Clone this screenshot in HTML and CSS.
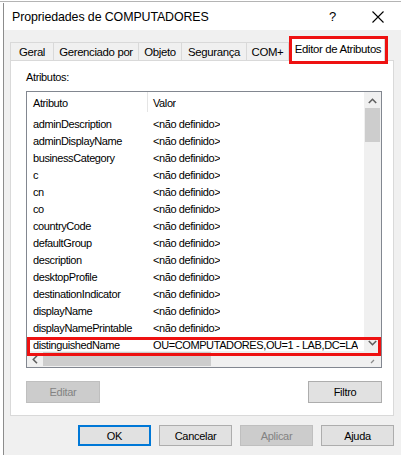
FILE: index.html
```html
<!DOCTYPE html>
<html>
<head>
<meta charset="utf-8">
<link rel="stylesheet" href="styles.css">
</head>
<body>
<div class="topline"></div>
<div class="window">
  <div class="titlebar">
    <span class="title">Propriedades de COMPUTADORES</span>
    <span class="help">?</span>
    <span class="close"><svg width="12" height="12" viewBox="0 0 12 12"><path d="M0.5 0.5 L11.5 11.5 M11.5 0.5 L0.5 11.5" stroke="#000" stroke-width="1.1" fill="none"/></svg></span>
  </div>
  <div class="body">
    <div class="tabs">
      <div class="tab t-geral">Geral</div>
      <div class="tab t-ger">Gerenciado por</div>
      <div class="tab t-obj">Objeto</div>
      <div class="tab t-seg">Segurança</div>
      <div class="tab t-com">COM+</div>
      <div class="tab active">Editor de Atributos<span class="mark mark-tab"></span></div>
    </div>
    <div class="panel">
      <div class="label">Atributos:</div>
      <div class="listbox">
        <div class="listmain">
          <div class="listview">
            <div class="row head"><span class="c1">Atributo</span><span class="sep"></span><span class="c2">Valor</span></div>
            <div class="row"><span class="c1">adminDescription</span><span class="c2">&lt;não definido&gt;</span></div>
            <div class="row"><span class="c1">adminDisplayName</span><span class="c2">&lt;não definido&gt;</span></div>
            <div class="row"><span class="c1">businessCategory</span><span class="c2">&lt;não definido&gt;</span></div>
            <div class="row"><span class="c1">c</span><span class="c2">&lt;não definido&gt;</span></div>
            <div class="row"><span class="c1">cn</span><span class="c2">&lt;não definido&gt;</span></div>
            <div class="row"><span class="c1">co</span><span class="c2">&lt;não definido&gt;</span></div>
            <div class="row"><span class="c1">countryCode</span><span class="c2">&lt;não definido&gt;</span></div>
            <div class="row"><span class="c1">defaultGroup</span><span class="c2">&lt;não definido&gt;</span></div>
            <div class="row"><span class="c1">description</span><span class="c2">&lt;não definido&gt;</span></div>
            <div class="row"><span class="c1">desktopProfile</span><span class="c2">&lt;não definido&gt;</span></div>
            <div class="row"><span class="c1">destinationIndicator</span><span class="c2">&lt;não definido&gt;</span></div>
            <div class="row"><span class="c1">displayName</span><span class="c2">&lt;não definido&gt;</span></div>
            <div class="row"><span class="c1">displayNamePrintable</span><span class="c2">&lt;não definido&gt;</span></div>
            <div class="row"><span class="c1">distinguishedName</span><span class="c2">OU=COMPUTADORES,OU=1 - LAB,DC=LA</span></div>
          </div>
          <div class="vscroll">
            <svg class="arrow" width="9" height="6" viewBox="0 0 9 6"><path d="M0.8 5 L4.5 1.3 L8.2 5" stroke="#606060" stroke-width="1.6" fill="none"/></svg>
            <div class="vthumb"></div>
            <div class="vspace"></div>
            <svg class="arrow down" width="9" height="6" viewBox="0 0 9 6"><path d="M0.8 1 L4.5 4.7 L8.2 1" stroke="#606060" stroke-width="1.6" fill="none"/></svg>
          </div>
        </div>
        <div class="hbar">
          <div class="hscroll">
            <svg class="harrow" width="6" height="9" viewBox="0 0 6 9"><path d="M5 0.8 L1.3 4.5 L5 8.2" stroke="#606060" stroke-width="1.6" fill="none"/></svg>
            <div class="hthumb"></div>
          </div>
          <div class="grip"><svg width="17" height="16" viewBox="0 0 17 16"><path d="M7 12 L10 9" stroke="#8a8a8a" stroke-width="1.2"/></svg></div>
        </div>
        <span class="mark mark-row"></span>
      </div>
      <div class="actions">
        <button class="btn disabled">Editar</button>
        <button class="btn">Filtro</button>
      </div>
    </div>
    <div class="footer">
      <button class="btn default">OK</button>
      <button class="btn">Cancelar</button>
      <button class="btn disabled">Aplicar</button>
      <button class="btn">Ajuda</button>
    </div>
  </div>
</div>
</body>
</html>
```
FILE: styles.css
```css
html, body {
  margin: 0;
  padding: 0;
  background: #ffffff;
  width: 401px;
  height: 455px;
  overflow: hidden;
}
.topline {
  height: 1px;
  margin-top: 1px;
  background: #b4b4b4;
}
.window {
  margin-left: 3px;
  margin-top: 1px;
  border-left: 1px solid #8c8c8c;
  height: 452px;
  display: flex;
  flex-direction: column;
  font-family: "Liberation Sans", Arial, sans-serif;
}
.titlebar {
  height: 27px;
  background: #ffffff;
  display: flex;
  align-items: center;
  padding-left: 8px;
  font-size: 12.4px;
  color: #000;
}
.title {
  flex: 1;
  letter-spacing: -0.1px;
}
.help {
  font-size: 13px;
  width: 12px;
  margin-right: 31px;
}
.close {
  width: 12px;
  height: 12px;
  margin-right: 17px;
  display: flex;
}
.body {
  flex: 1;
  background: #f0f0f0;
  padding: 7px 7px 0 6px;
  display: flex;
  flex-direction: column;
}
.tabs {
  display: flex;
  align-items: flex-end;
  height: 23px;
  font-size: 11.4px;
  position: relative;
  z-index: 2;
}
.tab {
  flex: none;
  height: 18px;
  line-height: 18px;
  border: 1px solid #d9d9d9;
  border-bottom: none;
  margin-left: -1px;
  background: #f0f0f0;
  letter-spacing: -0.35px;
  white-space: nowrap;
  text-align: center;
  box-sizing: border-box;
  padding: 0;
}
.t-geral { margin-left: 0; width: 44px; }
.t-ger { width: 86px; }
.t-obj { width: 44px; }
.t-seg { width: 66px; }
.t-com { width: 43px; }
.tab.active {
  background: #ffffff;
  width: 94px;
  height: 23px;
  line-height: 20px;
  margin-left: 2px;
  position: relative;
  margin-bottom: -1px;
}
.mark {
  position: absolute;
  border: 3px solid #ee1111;
  pointer-events: none;
}
.mark-tab {
  left: -3px;
  top: -3px;
  right: -4px;
  bottom: -3px;
}
.panel {
  height: 356px;
  background: #ffffff;
  border: 1px solid #d9d9d9;
  padding: 8px 10px 0 15px;
  display: flex;
  flex-direction: column;
  font-size: 11px;
  box-sizing: border-box;
  width: 384px;
}
.label {
  height: 16px;
  line-height: 16px;
  margin-bottom: 6px;
  letter-spacing: -0.35px;
}
.listbox {
  border: 1px solid #828790;
  height: 277px;
  box-sizing: border-box;
  display: flex;
  flex-direction: column;
  position: relative;
  width: 356px;
}
.listmain {
  flex: 1;
  display: flex;
  overflow: hidden;
}
.listview {
  flex: 1;
  overflow: hidden;
}
.row {
  height: 17px;
  line-height: 17px;
  display: flex;
  white-space: nowrap;
  letter-spacing: -0.4px;
}
.row.head {
  height: 24px;
  line-height: 22px;
  position: relative;
}
.c1 {
  width: 120px;
  padding-left: 6px;
  flex: none;
  box-sizing: border-box;
}
.c2 {
  padding-left: 6px;
  overflow: hidden;
}
.head .c2 { padding-left: 5px; }
.sep {
  width: 1px;
  height: 20px;
  background: #e5e5e5;
  flex: none;
}
.vscroll {
  width: 17px;
  background: #f0f0f0;
  display: flex;
  flex-direction: column;
  align-items: center;
}
.arrow {
  margin: 6px 0 4px;
  flex: none;
}
.arrow.down {
  margin: 0 0 5px;
}
.vthumb {
  width: 15px;
  height: 34px;
  background: #cdcdcd;
  flex: none;
}
.vspace { flex: 1; }
.hbar {
  height: 16px;
  display: flex;
}
.hscroll {
  flex: 1;
  background: #f0f0f0;
  display: flex;
  align-items: center;
}
.harrow {
  margin: 0 5px 0 5px;
}
.hthumb {
  width: 168px;
  height: 14px;
  background: #cdcdcd;
}
.grip {
  width: 17px;
  background: #f0f0f0;
}
.mark-row {
  left: 0px;
  right: 0px;
  top: 245px;
  height: 13px;
}
.actions {
  display: flex;
  justify-content: space-between;
  margin-top: 13px;
  width: 356px;
}
.btn {
  width: 74px;
  height: 22px;
  font-family: "Liberation Sans", Arial, sans-serif;
  font-size: 11px;
  letter-spacing: -0.3px;
  background: #e1e1e1;
  border: 1px solid #adadad;
  color: #000;
  padding: 0;
  margin: 0;
  box-sizing: border-box;
}
.btn.disabled {
  background: #cccccc;
  border-color: #bfbfbf;
  color: #838383;
}
.btn.default {
  border: 2px solid #0078d7;
}
.footer {
  display: flex;
  justify-content: flex-end;
  gap: 8px;
  padding-top: 9px;
  padding-right: 0px;
  width: 384px;
}
.footer .btn {
  width: 73px;
  height: 21px;
}
```
